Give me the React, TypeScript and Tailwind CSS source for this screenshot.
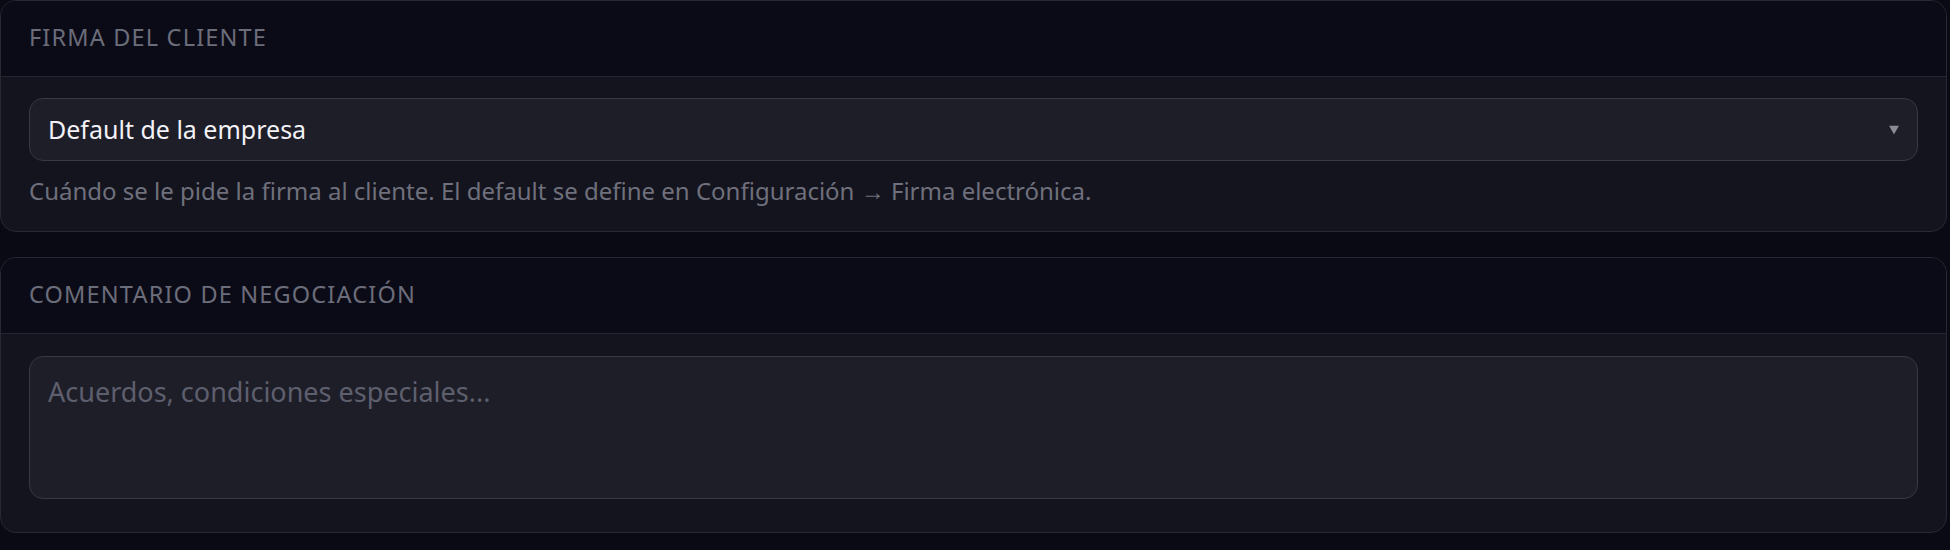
import { useState } from 'react'

function CardHeader({ title }: { title: string }) {
  return (
    <div className="flex h-[76px] items-center border-b border-[#262630] bg-[#0b0b17] px-7 pb-[1px]">
      <h3 className="text-[23.5px] font-normal uppercase leading-normal tracking-[0.05em] text-[#6c6d7a]">{title}</h3>
    </div>
  )
}

export default function App() {
  const [firma, setFirma] = useState('default')
  const [comentario, setComentario] = useState('')

  return (
    <div className="min-h-screen w-full bg-[#0a0a15] font-['Noto_Sans',sans-serif]">
      <div className="flex w-[1947px] flex-col gap-[25px]">
        {/* Firma del cliente */}
        <div className="overflow-hidden rounded-2xl border border-[#282833] bg-[#14141e]">
          <CardHeader title="Firma del cliente" />
          <div className="px-7 pt-[21px] pb-[22px]">
            <div className="relative">
              <select
                value={firma}
                onChange={(e) => setFirma(e.target.value)}
                className="block h-[63px] w-full appearance-none rounded-[14px] border border-[#393944] bg-[#1e1e29] px-[18px] text-[25px] text-[#f2f2f7] outline-none"
              >
                <option value="default">Default de la empresa</option>
                <option value="siempre">Siempre</option>
                <option value="nunca">Nunca</option>
              </select>
              <svg
                className="pointer-events-none absolute right-[19px] top-1/2 -translate-y-1/2"
                width="10"
                height="9"
                viewBox="0 0 10 9"
              >
                <polygon points="0,0 10,0 5,9" fill="#8b8b97" />
              </svg>
            </div>
            <p className="mt-[12px] text-[24px] leading-normal text-[#6f707c]">
              Cuándo se le pide la firma al cliente. El default se define en Configuración → Firma electrónica.
            </p>
          </div>
        </div>

        {/* Comentario de negociación */}
        <div className="overflow-hidden rounded-2xl border border-[#282833] bg-[#14141e]">
          <CardHeader title="Comentario de negociación" />
          <div className="px-7 pt-[22px] pb-[33px]">
            <textarea
              value={comentario}
              onChange={(e) => setComentario(e.target.value)}
              placeholder="Acuerdos, condiciones especiales..."
              className="block h-[143px] w-full resize-none rounded-[14px] border border-[#393944] bg-[#1e1e29] px-[18px] pt-[15px] text-[27px] leading-[1.5] text-[#f2f2f7] outline-none placeholder:text-[#5e5f6d]"
            />
          </div>
        </div>
      </div>
    </div>
  )
}
